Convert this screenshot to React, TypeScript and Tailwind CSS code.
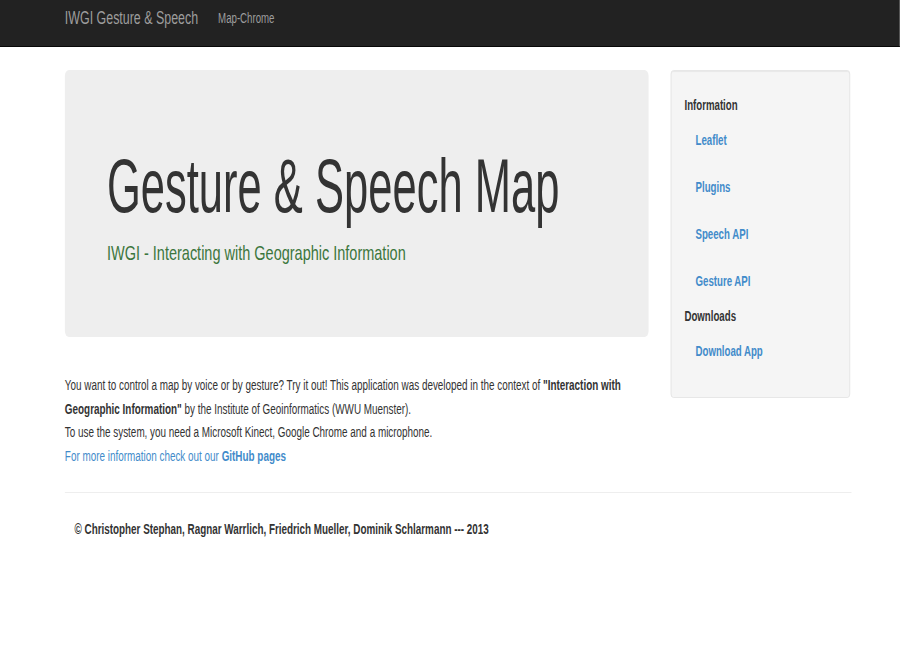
import React from 'react';

// The reference is a Bootstrap page squeezed horizontally, so the page is laid
// out at its natural width and scaled on the x axis as a whole.
const sideLinks = ['Leaflet', 'Plugins', 'Speech API', 'Gesture API'];

function Navbar() {
  return (
    <div className="h-[47px] bg-[#222222] border-b border-[#080808]">
      <div className="ml-[94px] flex items-start pt-[8px]">
        <span className="text-[18px] leading-[20px] text-[#9d9d9d]">IWGI Gesture &amp; Speech</span>
        <span className="ml-[29px] text-[14px] leading-[20px] text-[#9d9d9d]">Map-Chrome</span>
      </div>
    </div>
  );
}

function Jumbotron() {
  return (
    <div className="w-[846px] h-[267px] rounded-[6px] bg-[#eeeeee] pl-[61px] pt-[74px]">
      <h1 className="whitespace-nowrap text-[76px] leading-[84px] font-normal text-[#333333] origin-left scale-x-[0.83]">
        Gesture &amp; Speech Map
      </h1>
      <p className="mt-[10px] text-[21px] leading-[30px] text-[#3c763d]">
        IWGI - Interacting with Geographic Information
      </p>
    </div>
  );
}

function Sidebar() {
  return (
    <div className="ml-[32px] w-[260px] h-[328px] rounded-[4px] border border-[#e3e3e3] bg-[#f5f5f5] shadow-[inset_0_1px_1px_rgba(0,0,0,0.05)] pl-[19px] pt-[24px]">
      <div className="h-[20px] text-[14px] leading-[20px] font-bold text-[#333333]">Information</div>
      <ul className="mt-[1px]">
        {sideLinks.map((l) => (
          <li key={l} className="h-[47px] flex items-center pl-[16px] text-[14px] leading-[20px] font-bold text-[#428bca]">
            {l}
          </li>
        ))}
      </ul>
      <div className="mt-[2px] h-[20px] text-[14px] leading-[20px] font-bold text-[#333333]">Downloads</div>
      <div className="mt-[1px] h-[47px] flex items-center pl-[16px] text-[14px] leading-[20px] font-bold text-[#428bca]">
        Download App
      </div>
    </div>
  );
}

export default function App() {
  return (
    <div
      className="min-h-screen overflow-hidden bg-white"
      style={{ fontFamily: '"Liberation Sans", Arial, Helvetica, sans-serif' }}
    >
      <div className="w-[1304px] origin-top-left scale-x-[0.69]">
        <Navbar />
        <div className="ml-[94px] w-[1140px] pt-[23px]">
          <div className="flex items-start">
            <div>
              <Jumbotron />
              <div className="mt-[37px] w-[846px] text-[14.35px] leading-[23.5px] text-[#333333]">
                <p>
                  You want to control a map by voice or by gesture? Try it out! This application was developed in
                  the context of <b>"Interaction with</b> <b>Geographic Information"</b> by the Institute of
                  Geoinformatics (WWU Muenster).
                  <br />
                  To use the system, you need a Microsoft Kinect, Google Chrome and a microphone.
                  <br />
                  <span className="text-[#428bca]">
                    For more information check out our <b>GitHub pages</b>
                  </span>
                </p>
              </div>
            </div>
            <Sidebar />
          </div>
          <hr className="mt-[24px] border-t border-[#eeeeee]" />
          <p className="mt-[26px] pl-[14px] text-[14.3px] leading-[20px] font-bold text-[#333333]">
            © Christopher Stephan, Ragnar Warrlich, Friedrich Mueller, Dominik Schlarmann --- 2013
          </p>
        </div>
      </div>
    </div>
  );
}
